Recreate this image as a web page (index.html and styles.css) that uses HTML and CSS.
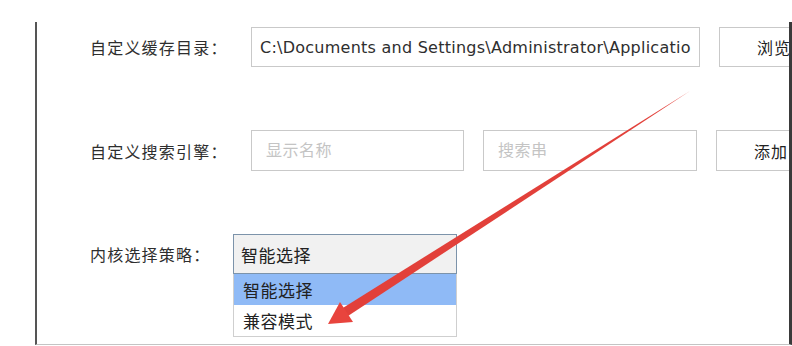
FILE: index.html
```html
<!DOCTYPE html>
<html lang="zh-CN">

<head>
    <meta charset="UTF-8" />
    <meta name="viewport" content="width=device-width, initial-scale=1.0" />
    <title>设置</title>
    <link rel="stylesheet" href="styles.css">
</head>

<body>
    <div class="panel">
        <div class="row row-cache">
            <label class="label" for="cache-dir">自定义缓存目录：</label>
            <input class="field field-path" type="text" id="cache-dir"
                value="C:\Documents and Settings\Administrator\Application Data\Cache" readonly />
            <button class="btn" type="button">浏览</button>
        </div>

        <div class="row row-search">
            <label class="label" for="engine-name">自定义搜索引擎：</label>
            <input class="field field-name" type="text" id="engine-name" placeholder="显示名称" />
            <input class="field field-query" type="text" id="engine-query" placeholder="搜索串" />
            <button class="btn btn-add" type="button">添加</button>
        </div>

        <div class="row row-core">
            <span class="label label-short">内核选择策略：</span>
            <div class="select-wrap">
                <div class="select">智能选择</div>
                <ul class="options">
                    <li class="option active">智能选择</li>
                    <li class="option">兼容模式</li>
                </ul>
            </div>
        </div>
    </div>

    <!-- 标注箭头 -->
    <svg class="arrow" width="792" height="346" viewBox="0 0 792 346">
        <polygon points="690,91 347.6,316.2 342.4,308.2" fill="#e2403a" />
        <polygon points="328,324 340,302 353,322" fill="#e8443d" />
    </svg>
</body>

</html>
```

FILE: styles.css
```css
* {
    box-sizing: border-box;
}

body {
    margin: 0;
    background-color: #fff;
    font-family: "Noto Sans CJK SC", "Noto Sans", sans-serif;
    color: #333;
    overflow: hidden;
}

.panel {
    margin: 22px 0 0 35px;
    width: 757px;
    height: 323px;
    border-left: 2px solid #555;
    border-right: 3px solid #3a3a3a;
    border-bottom: 1px solid #c4c4c4;
    overflow: hidden;
}

.row {
    display: flex;
    align-items: center;
    padding-left: 53px;
    height: 40px;
}

.row-cache {
    margin-top: 5px;
}

.row-search {
    margin-top: 63px;
    height: 41px;
}

.row-core {
    margin-top: 63px;
}

.label {
    flex: none;
    width: 161px;
    font-size: 16px;
    letter-spacing: 1.2px;
    color: #2e2e2e;
}

.label-short {
    width: 143px;
}

.field {
    flex: none;
    height: 100%;
    margin: 0;
    padding: 0 8px;
    border: 1px solid #c9c9c9;
    background-color: #fff;
    font-family: "DejaVu Sans", sans-serif;
    font-size: 16px;
    letter-spacing: 0.25px;
    color: #2e2e2e;
    outline: none;
}

.field::placeholder {
    font-family: "Noto Sans CJK SC", sans-serif;
    font-size: 16px;
    letter-spacing: 0.5px;
    color: #c4c4c4;
}

.field-path {
    width: 449px;
}

.field-name {
    width: 213px;
    padding-left: 14px;
}

.field-query {
    width: 214px;
    margin-left: 19px;
    padding-left: 14px;
}

.btn {
    flex: none;
    width: 110px;
    height: 100%;
    margin-left: 19px;
    padding: 0;
    border: 1px solid #c9c9c9;
    background-color: #fff;
    font-family: "Noto Sans CJK SC", sans-serif;
    font-size: 16px;
    letter-spacing: 1px;
    color: #222;
}

.select-wrap {
    position: relative;
    width: 224px;
    height: 100%;
}

.select {
    height: 100%;
    padding-left: 7px;
    display: flex;
    align-items: center;
    border: 1px solid #7c93aa;
    background-color: #f1f1f1;
    font-size: 17px;
    letter-spacing: 0.5px;
    color: #222;
}

.options {
    position: absolute;
    top: 100%;
    left: 0;
    width: 100%;
    margin: 0;
    padding: 0;
    list-style: none;
    border: 1px solid #cfcfcf;
    border-top: none;
    background-color: #fff;
}

.option {
    height: 31px;
    padding-left: 9px;
    display: flex;
    align-items: center;
    font-size: 17px;
    letter-spacing: 0.5px;
    color: #222;
}

.option.active {
    background-color: #8fbaf6;
}

.arrow {
    position: absolute;
    top: 0;
    left: 0;
    pointer-events: none;
}
```
